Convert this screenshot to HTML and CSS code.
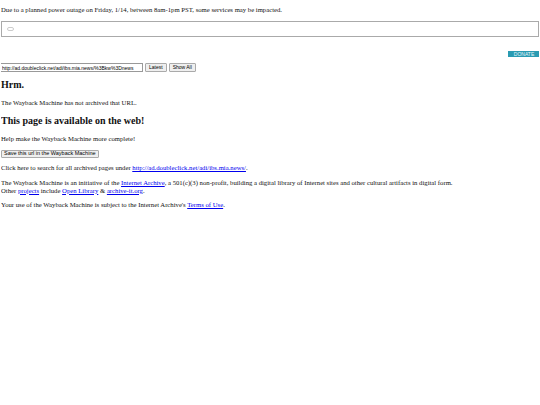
FILE: index.html
```html
<!DOCTYPE html>
<html>
<head>
<meta charset="utf-8">
<link rel="stylesheet" href="styles.css">
</head>
<body>
<div class="notice">Due to a planned power outage on Friday, 1/14, between 8am-1pm PST, some services may be impacted.</div>
<div class="box"><span class="box-icon"></span></div>
<div class="donate-row"><span class="donate">DONATE</span></div>
<form class="search">
  <input class="url" type="text" value="http://ad.doubleclick.net/adi/ibs.mia.news/%3Bkw%3Dnews">
  <button type="button" class="btn">Latest</button>
  <button type="button" class="btn">Show All</button>
</form>
<h2 class="h first">Hrm.</h2>
<p>The Wayback Machine has not archived that URL.</p>
<h2 class="h">This page is available on the web!</h2>
<p>Help make the Wayback Machine more complete!</p>
<form class="save"><button type="button" class="btn save-btn">Save this url in the Wayback Machine</button></form>
<p>Click here to search for all archived pages under <a href="#">http://ad.doubleclick.net/adi/ibs.mia.news/</a>.</p>
<p>The Wayback Machine is an initiative of the <a href="#">Internet Archive</a>, a 501(c)(3) non-profit, building a digital library of Internet sites and other cultural artifacts in digital form.<br>Other <a href="#">projects</a> include <a href="#">Open Library</a> &amp; <a href="#">archive-it.org</a>.</p>
<p>Your use of the Wayback Machine is subject to the Internet Archive's <a href="#">Terms of Use</a>.</p>
</body>
</html>
```
FILE: styles.css
```css
html, body { background: #fff; }
body {
  margin: 0 1px;
  font-family: "Liberation Serif", "Times New Roman", serif;
  font-size: 6.7px;
  line-height: 7.7px;
  color: #111;
}
.notice {
  padding-top: 6px;
  height: 15px;
}
.box {
  border: 1px solid #aaa;
  height: 14px;
  display: flex;
  align-items: center;
  padding-left: 5px;
}
.box-icon {
  display: block;
  width: 5px;
  height: 2px;
  border: 1px solid #ccc;
  border-radius: 2px;
}
.donate-row {
  display: flex;
  justify-content: flex-end;
  margin-top: 14px;
  margin-right: -1px;
}
.donate {
  background: #2a9bb2;
  color: #e6f6fa;
  font-family: "Liberation Sans", Arial, sans-serif;
  font-size: 5px;
  line-height: 6px;
  padding: 0 4px;
  width: 24px;
  text-align: center;
}
.search {
  display: flex;
  gap: 2px;
  margin: 6px 0 0 -1px;
  align-items: center;
}
.url {
  width: 143px;
  height: 9px;
  box-sizing: border-box;
  border: 1px solid #999;
  padding: 0 1px;
  font-family: "Liberation Sans", Arial, sans-serif;
  font-size: 5px;
  margin: 0;
}
.btn {
  height: 9px;
  box-sizing: border-box;
  border: 1px solid #aaa;
  background: #efefef;
  border-radius: 1px;
  font-family: "Liberation Sans", Arial, sans-serif;
  font-size: 5px;
  line-height: 5px;
  padding: 0 3px;
  margin: 0;
  color: #000;
}
.save-btn {
  font-size: 5.5px;
  height: 8px;
  padding: 0 2px;
}
.h {
  font-size: 10px;
  line-height: 11.5px;
  margin: 8.3px 0;
  font-weight: bold;
}
.h.first { margin-top: 7.3px; }
p { margin: 6.7px 0; }
.save { margin: 0; }
a { color: #0000ee; text-decoration: underline; }
```
